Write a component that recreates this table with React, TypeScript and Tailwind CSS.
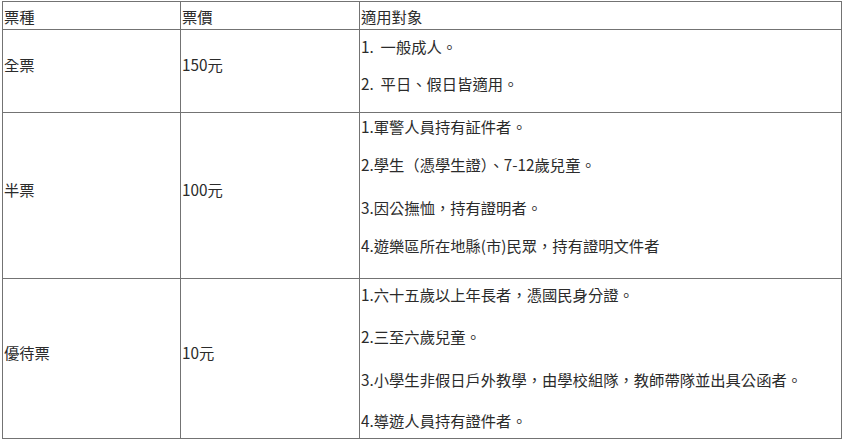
const ROWS = [
  {
    type: '全票',
    price: '150元',
    height: 'h-[83px]',
    pad: 'pt-[5px]',
    items: [
      { text: '1.\u00a0\u00a0一般成人。', gap: '' },
      { text: '2.\u00a0\u00a0平日、假日皆適用。', gap: 'mt-[15px]' },
    ],
  },
  {
    type: '半票',
    price: '100元',
    height: 'h-[166px]',
    pad: 'pt-[2px]',
    items: [
      { text: '1.軍警人員持有証件者。', gap: '' },
      { text: '2.學生（憑學生證）、7-12歲兒童。', gap: 'mt-[16px]' },
      { text: '3.因公撫恤，持有證明者。', gap: 'mt-[21px]' },
      { text: '4.遊樂區所在地縣(市)民眾，持有證明文件者', gap: 'mt-[16px]' },
    ],
  },
  {
    type: '優待票',
    price: '10元',
    height: 'h-[160px]',
    pad: 'pt-[4px]',
    items: [
      { text: '1.六十五歲以上年長者，憑國民身分證。', gap: '' },
      { text: '2.三至六歲兒童。', gap: 'mt-[20px]' },
      { text: '3.小學生非假日戶外教學，由學校組隊，教師帶隊並出具公函者。', gap: 'mt-[21px]' },
      { text: '4.導遊人員持有證件者。', gap: 'mt-[19px]' },
    ],
  },
];

export default function App() {
  return (
    <div
      lang="zh-TW"
      className="h-[446px] w-[856px] bg-white pl-[2px] pt-[1px] font-['Noto_Sans_CJK_TC','Noto_Sans',sans-serif] text-[15.3px] leading-[22px] text-[#2b2b2b]"
    >
      <table className="w-[839px] table-fixed border-collapse">
        <colgroup>
          <col className="w-[178px]" />
          <col className="w-[179px]" />
          <col className="w-[482px]" />
        </colgroup>
        <thead>
          <tr className="h-[28px]">
            <th className="border border-[#737373] px-px text-left align-middle font-normal">票種</th>
            <th className="border border-[#737373] px-px text-left align-middle font-normal">票價</th>
            <th className="border border-[#737373] px-px text-left align-middle font-normal">適用對象</th>
          </tr>
        </thead>
        <tbody>
          {ROWS.map((row) => (
            <tr key={row.type} className={row.height}>
              <td className="border border-[#737373] px-px pb-[14px] align-middle">{row.type}</td>
              <td className="border border-[#737373] px-px pb-[14px] align-middle">{row.price}</td>
              <td className={`border border-[#737373] px-px align-top ${row.pad}`}>
                {row.items.map((item) => (
                  <p key={item.text} className={item.gap}>
                    {item.text}
                  </p>
                ))}
              </td>
            </tr>
          ))}
        </tbody>
      </table>
    </div>
  );
}
